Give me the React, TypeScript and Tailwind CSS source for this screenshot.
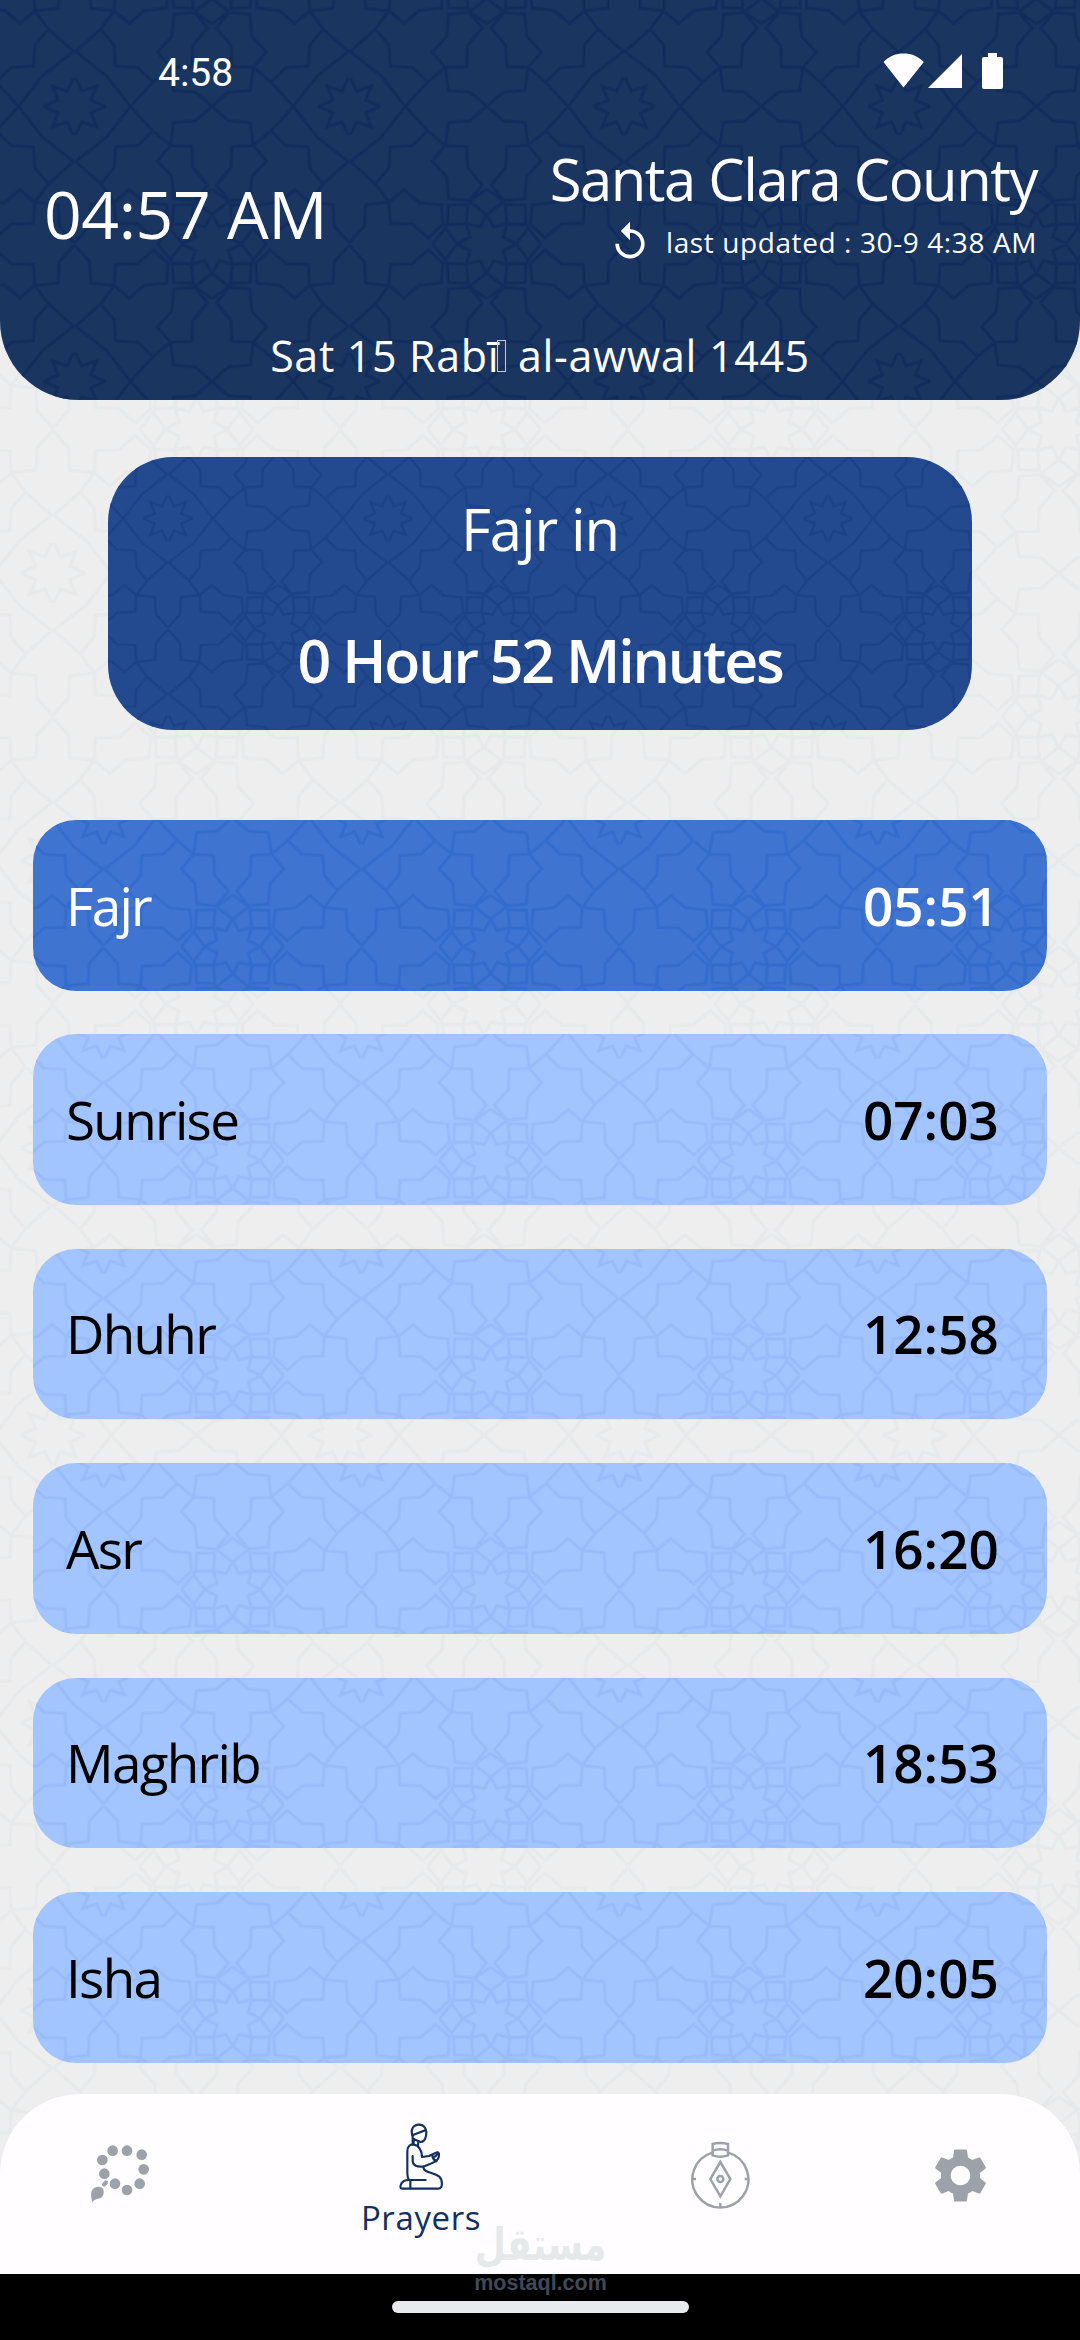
import { MdReplay, MdSettings } from "react-icons/md";

interface Prayer {
  name: string;
  time: string;
}

const PRAYERS: Prayer[] = [
  { name: "Fajr", time: "05:51" },
  { name: "Sunrise", time: "07:03" },
  { name: "Dhuhr", time: "12:58" },
  { name: "Asr", time: "16:20" },
  { name: "Maghrib", time: "18:53" },
  { name: "Isha", time: "20:05" },
];

const ACTIVE = "Fajr";

// One quarter of the girih tile, from the star centre to the rosette centre.
const QUARTER = [
  "M121 32L77 51L94 93L50 78L31 118",
  "M28 200L31 197L124 124L193 36L196 32",
  "M196 32L263 105L316 149",
  "M316 149L380 152L383 216L427 267L388 314L326 309L320 242L276 195Z",
  "M263 105L218 149L151 153L147 216L106 264",
  "M28 194L106 264L147 319",
  "M147 319L192 281L238 320L304 327L309 385L265 426L217 384L151 382Z",
  "M147 319L77 326L73 391L28 441",
  "M316 149L325 80L390 75L440 32",
  "M325 328L384 326L379 384L322 386Z",
  "M440 280L388 316L440 356",
  "M440 354L420 393L379 384L390 424L350 444",
  "M277 444L316 397L350 442",
  "M320 386L316 397",
].join("");

const SIZE = 824;

interface GirihProps {
  id: string;
  x: number;
  y: number;
  tile: number;
  stroke: string;
}

function Girih({ id, x, y, tile, stroke }: GirihProps) {
  return (
    <svg className="absolute inset-0 h-full w-full" aria-hidden="true">
      <defs>
        <pattern
          id={id}
          width={SIZE}
          height={SIZE}
          patternUnits="userSpaceOnUse"
          patternTransform={`translate(${x} ${y}) scale(${tile / SIZE})`}
        >
          <g fill="none" stroke={stroke} strokeWidth="9.5">
            <path d={QUARTER} transform="translate(-28 -32)" />
            <path d={QUARTER} transform="translate(852 -32) scale(-1 1)" />
            <path d={QUARTER} transform="translate(-28 856) scale(1 -1)" />
            <path d={QUARTER} transform="translate(852 856) scale(-1 -1)" />
          </g>
        </pattern>
      </defs>
      <rect width="100%" height="100%" fill={`url(#${id})`} />
    </svg>
  );
}

function StatusBar() {
  return (
    <div className="flex h-[145px] items-center justify-between pr-[77px] pl-[158px]">
      <span className="pt-px font-[Roboto,sans-serif] text-[39px]">4:58</span>
      <svg width="120" height="37" viewBox="883 53 120 37" fill="#fffdff" className="-mt-[2px]">
        <path d="M903.500 87.500L883.500 62C889 56 896 53.500 903.500 53.500S918 56 923.800 62Z" />
        <path d="M928 88L962 54V88Z" />
        <path d="M988 53h9v4h4q2 0 2 2v28q0 2-2 2h-17q-2 0-2-2v-28q0-2 2-2h4z" />
      </svg>
    </div>
  );
}

function Header() {
  return (
    <header className="relative h-[399.500px] overflow-hidden rounded-b-[79px] bg-[#1a355f] text-[#fffdff]">
      <Girih id="girih-header" x={74.500} y={106.500} tile={274.800} stroke="#112d5d" />
      <div className="relative">
        <StatusBar />
        <div className="flex h-[127px] items-center justify-between pr-[43px] pl-[44px]">
          <div className="pt-[8px] text-[66px] leading-none tracking-[-0.4px]">04:57 AM</div>
          <div className="flex flex-col items-end">
            <div className="text-[58px] leading-[67px] tracking-[-1.5px]">Santa Clara County</div>
            <div className="flex h-[60px] items-center">
              <MdReplay size={44} className="mr-[14px]" />
              <span className="text-[28px] tracking-[0.6px]">last updated : 30-9 4:38 AM</span>
            </div>
          </div>
        </div>
        <div className="mt-[40px] text-center text-[43px] leading-[88px] tracking-[0.65px]">
          Sat 15 Rabī
          <span className="-ml-[2px] inline-block h-[32px] w-[9px] border border-[#c4cddd] align-baseline" />{" "}
          al-awwal 1445
        </div>
      </div>
    </header>
  );
}

function Countdown() {
  return (
    <section className="relative mx-auto mt-[57.500px] h-[273px] w-[864px] overflow-hidden rounded-[65px] bg-[#23498e] text-center text-[#fffdff]">
      <Girih id="girih-countdown" x={60} y={61.500} tile={220} stroke="#1b4186" />
      <div className="relative pt-[6px]">
        <div className="text-[58px] leading-[132px] tracking-[-1.1px]">Fajr in</div>
        <div className="text-[59px] leading-[130px] font-semibold tracking-[-2.2px]">
          0 Hour 52 Minutes
        </div>
      </div>
    </section>
  );
}

function PrayerRow({ name, time }: Prayer) {
  const active = name === ACTIVE;
  return (
    <li
      className={`relative h-[170.6px] overflow-hidden rounded-[43px] ${
        active ? "bg-[#3f75d1] text-[#fffdff]" : "bg-[#a2c5ff] text-black"
      }`}
    >
      <Girih
        id={`girih-${name}`}
        x={70.500}
        y={-2.400}
        tile={258}
        stroke={active ? "#336ccd" : "#99bbfa"}
      />
      <div className="relative flex h-full items-center pr-[46px] pl-[33px]">
        <span className="flex-1 text-[53px] tracking-[-1.7px]">{name}</span>
        <span className="w-[138px] text-[53px] font-semibold">{time}</span>
      </div>
    </li>
  );
}

function BeadsIcon() {
  const beads = [
    [158, 93], [201, 93], [245, 105], [251, 149], [239, 192],
    [201, 211], [165, 192], [133, 162], [127, 121],
  ];
  return (
    <svg width="60" height="60" viewBox="90 70 180 180" fill="currentColor">
      {beads.map(([cx, cy]) => (
        <circle key={`${cx}-${cy}`} cx={cx} cy={cy} r="16" />
      ))}
      <path d="M126 192L136 182L144 184L143 192L134 201L127 199Z" />
      <path d="M97 249C93 232 91 217 99 208C108 199 121 199 129 207C134 218 130 232 120 236C107 239 103 240 97 249Z" />
    </svg>
  );
}

function PrayingIcon() {
  return (
    <svg
      width="48"
      height="70"
      viewBox="168 66 144 210"
      fill="none"
      stroke="currentColor"
      strokeWidth="6.5"
      strokeLinecap="round"
      strokeLinejoin="round"
    >
      <path d="M215 134V108C207 89 217 74 234 74C252 74 259 92 255 108C253 118 248 126 239 126L219 118" />
      <path d="M214 106L253 91M219 118L217 133M232 126L231 138" />
      <path d="M205 240C199 235 199 226 199 215V155C199 139 207 132 218 133C234 136 242 149 243 171L264 168L285 158C290 155 295 158 294 166C294 184 273 190 248 199C228 202 216 197 215 183V168" />
      <path d="M274 167C275 175 279 181 286 184M291 158C286 170 278 174 274 167" />
      <path d="M247 202C249 219 274 215 294 229C304 237 308 266 292 266H183C174 266 179 247 190 242C196 239 203 240 210 240H254M208 240V265" />
    </svg>
  );
}

function CompassIcon() {
  return (
    <svg width="60" height="70" viewBox="90 60 180 210" fill="none" stroke="currentColor" strokeWidth="7.5">
      <path d="M205 98A84 84 0 1 1 157 98" />
      <path d="M158 72Q181 66 204 72V106Q181 114 158 106ZM158 92Q181 83 204 92" />
      <path d="M181 126L211 177L181 229L151 177Z" />
      <circle cx="181" cy="177" r="9" />
      <path d="M97 177H108M254 177H265M181 261V249" />
    </svg>
  );
}

function BottomNav() {
  return (
    <nav className="relative mt-auto flex h-[180px] rounded-t-[80px] bg-[#fffdff] text-[#9ca1aa]">
      <button className="flex w-[240px] justify-center pt-[49px]">
        <BeadsIcon />
      </button>
      <button className="flex w-[362px] flex-col items-center pt-[28px] text-[#122f60]">
        <PrayingIcon />
        <span className="text-[33px] leading-[52px] tracking-[0.6px]">Prayers</span>
      </button>
      <button className="flex w-[236px] justify-center pt-[46px]">
        <CompassIcon />
      </button>
      <button className="flex w-[242px] justify-center pt-[49px] pl-[2px]">
        <MdSettings size={65} />
      </button>
    </nav>
  );
}

export default function App() {
  return (
    <div className="relative flex h-[2340px] w-[1080px] flex-col overflow-hidden bg-[#eeeeee] font-['Open_Sans','Noto_Sans',sans-serif]">
      <Girih id="girih-page" x={52.700} y={285.400} tile={287.500} stroke="#e8e9ea" />
      <Header />
      <Countdown />
      <ul className="mx-[33px] mt-[90px] flex flex-col gap-[43.8px]">
        {PRAYERS.map((prayer) => (
          <PrayerRow key={prayer.name} {...prayer} />
        ))}
      </ul>
      <BottomNav />
      <div className="relative flex h-[66px] justify-center bg-black pt-[27px]">
        <div className="h-[12px] w-[297px] rounded-full bg-[#e9eaec]" />
      </div>

      {/* Watermark */}
      <div className="absolute top-[2229px] left-[475px] flex w-[131px] flex-col items-center">
        <div
          className="origin-bottom scale-y-125 font-['DejaVu_Sans',sans-serif] text-[36px] leading-[42px] font-bold text-[#e6e9ea]"
          dir="rtl"
        >
          مستقل
        </div>
        <div className="pt-[2px] font-['Liberation_Sans',sans-serif] text-[21.500px] leading-[20px] font-bold text-[#414857]">
          mostaql.com
        </div>
      </div>
    </div>
  );
}
